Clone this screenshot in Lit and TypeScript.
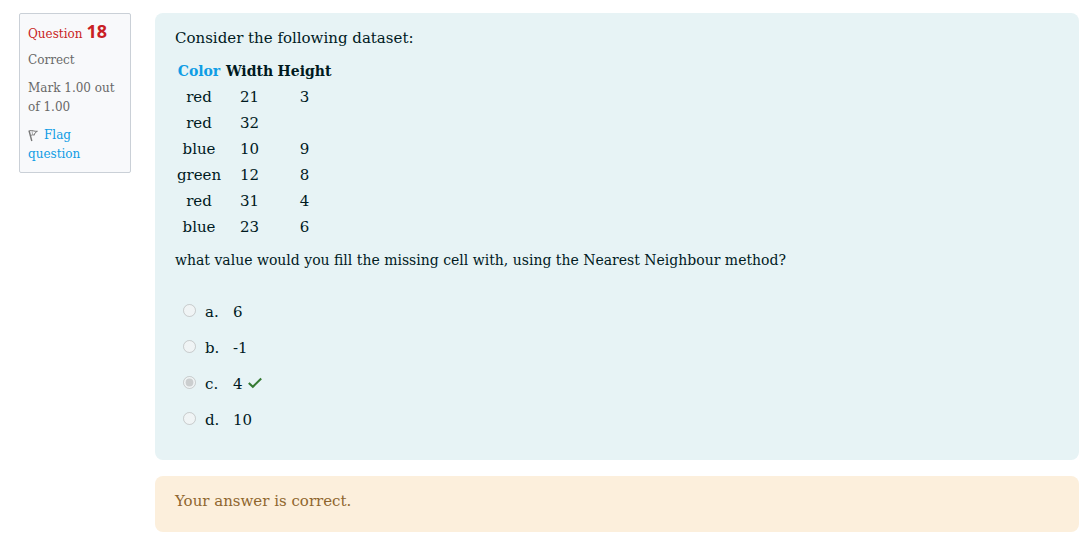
import { LitElement, html, css, nothing } from "lit";
import { customElement, property } from "lit/decorators.js";

const ROWS: string[][] = [
  ["red", "21", "3"],
  ["red", "32", ""],
  ["blue", "10", "9"],
  ["green", "12", "8"],
  ["red", "31", "4"],
  ["blue", "23", "6"],
];

const OPTIONS = [
  { letter: "a", text: "6" },
  { letter: "b", text: "-1" },
  { letter: "c", text: "4", chosen: true },
  { letter: "d", text: "10" },
];

@customElement("question-info")
class QuestionInfo extends LitElement {
  @property() number = "";
  @property() status = "";
  @property() grade = "";

  static styles = css`
    :host {
      display: flex;
      flex-direction: column;
      gap: 9px;
      box-sizing: border-box;
      padding: 8px;
      border: 1px solid #cad0d7;
      border-radius: 2px;
      background: #f8f9fb;
      color: #686868;
      font-size: 12px;
      line-height: 19px;
    }
    .title {
      display: flex;
      align-items: baseline;
      gap: 4px;
      height: 20px;
      margin: 0;
      color: #c91f25;
      font-size: 12px;
      font-weight: 400;
      white-space: nowrap;
    }
    .number {
      font-size: 18px;
      font-weight: 700;
      font-family: "Noto Sans", sans-serif;
    }
    .flag {
      color: #0f9de5;
      text-decoration: none;
    }
    .icon {
      width: 12px;
      height: 13px;
      margin-right: 4px;
      vertical-align: -3px;
    }
  `;

  render() {
    return html`
      <h3 class="title">Question <span class="number">${this.number}</span></h3>
      <div>${this.status}</div>
      <div>${this.grade}</div>
      <div>
        <a class="flag" href="#flag"
          ><svg class="icon" viewBox="0 0 12 13" fill="none" stroke="#777" aria-hidden="true">
            <path d="M1 1.5 3.8 12" stroke-width="1.4" />
            <path d="M1.5 1.8C4 .9 6 2.6 9.4 2.3 7.4 3.1 6.4 4.6 6.2 6.2 5 5.6 4 5.8 2.8 6.6" />
            <path d="M4 2.2 4.6 5.6" stroke-width=".6" /></svg
          >Flag question</a
        >
      </div>
    `;
  }
}

@customElement("app-root")
class AppRoot extends LitElement {
  static styles = css`
    :host {
      display: grid;
      grid-template-columns: 112px minmax(0, 1fr);
      column-gap: 24px;
      align-items: start;
      padding: 13px 13px 14px 19px;
      background: #fff;
      color: #001a1e;
      font-family: "DejaVu Serif", serif;
      font-size: 15px;
      line-height: 24px;
    }
    .content {
      display: flex;
      flex-direction: column;
      gap: 16px;
    }
    .panel {
      padding: 13px 20px 19px;
      border-radius: 8px;
    }
    .formulation {
      padding-bottom: 26px;
      background: #e7f3f5;
    }
    .feedback {
      background: #fcefdc;
      color: #8f662e;
    }
    p {
      margin: 0;
    }
    .question {
      font-size: 14px;
    }
    .data {
      margin: 8px 0;
      border-collapse: collapse;
      table-layout: fixed;
      width: 158px;
    }
    .data th,
    .data td {
      padding: 1px 0;
      height: 24px;
      text-align: center;
      white-space: nowrap;
    }
    .data th {
      font-size: 14px;
    }
    .color {
      width: 48px;
    }
    .width {
      width: 53px;
    }
    .data th.color {
      color: #0f9de5;
    }
    .answers {
      display: flex;
      flex-direction: column;
      gap: 12px;
      margin: 0;
      padding: 28px 8px 2px;
      border: 0;
    }
    .option {
      display: flex;
      align-items: center;
    }
    .option input {
      width: 13px;
      height: 13px;
      margin: 0 9px 4px 0;
    }
    .option label {
      display: flex;
      align-items: center;
    }
    .letter {
      width: 28px;
    }
    .check {
      width: 16px;
      height: 12px;
      margin: 0 0 2px 4px;
    }
  `;

  render() {
    return html`
      <question-info number="18" status="Correct" grade="Mark 1.00 out of 1.00"></question-info>
      <main class="content">
        <section class="panel formulation">
          <p>Consider the following dataset:</p>
          <table class="data">
            <thead>
              <tr>
                <th class="color">Color</th>
                <th class="width">Width</th>
                <th>Height</th>
              </tr>
            </thead>
            <tbody>
              ${ROWS.map((row) => html`<tr>${row.map((cell) => html`<td>${cell}</td>`)}</tr>`)}
            </tbody>
          </table>
          <p class="question">
            what value would you fill the missing cell with, using the Nearest Neighbour method?
          </p>
          <fieldset class="answers" aria-label="Answer">
            ${OPTIONS.map(
              (o) => html`<div class="option">
                <input type="radio" name="answer" id=${o.letter} disabled ?checked=${o.chosen} />
                <label for=${o.letter}>
                  <span class="letter">${o.letter}.</span>
                  <span>${o.text}</span>
                  ${o.chosen
                    ? html`<svg class="check" viewBox="0 0 16 12" role="img" aria-label="Correct">
                        <path d="M1.8 6 5.8 9.8 14.2 1.6" fill="none" stroke="#357a32" stroke-width="2.1" />
                      </svg>`
                    : nothing}
                </label>
              </div>`,
            )}
          </fieldset>
        </section>
        <section class="panel feedback">
          <p>Your answer is correct.</p>
        </section>
      </main>
    `;
  }
}
